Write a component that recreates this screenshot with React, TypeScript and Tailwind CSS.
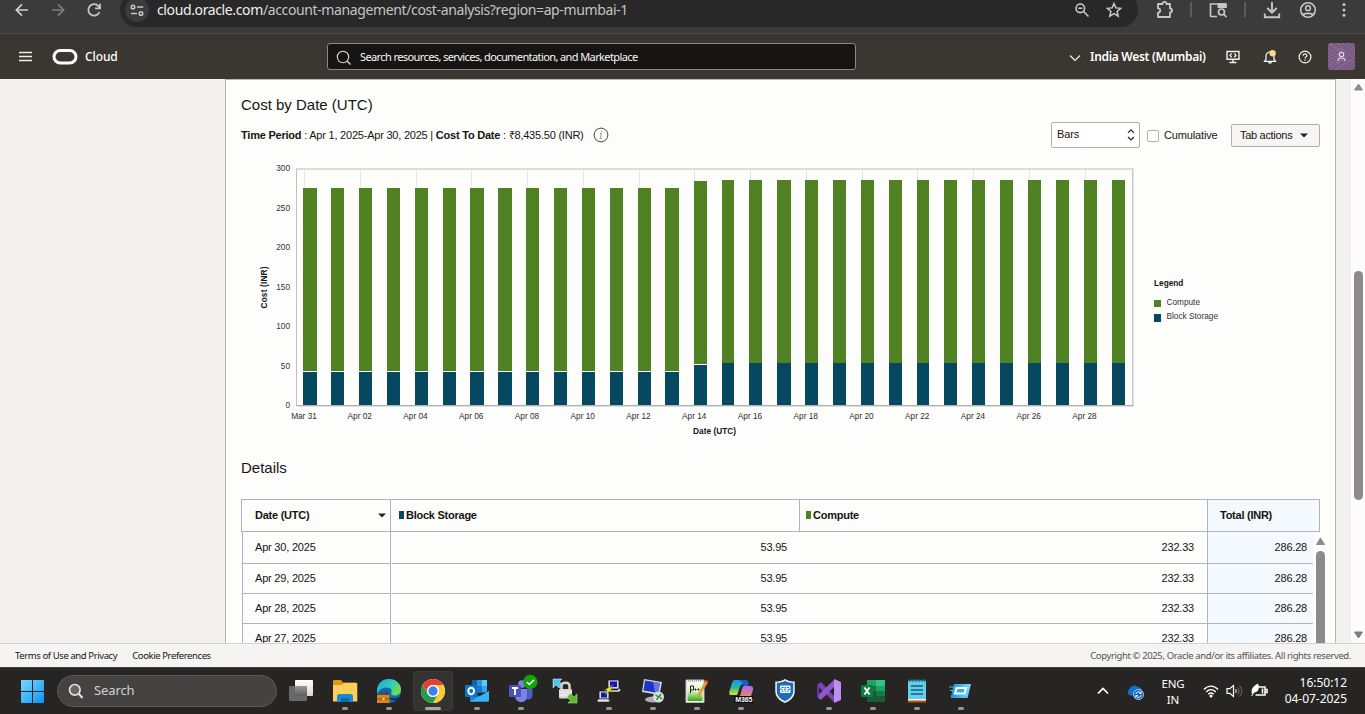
import React from "react";

type IconProps = { children: React.ReactNode; className?: string; size?: number; box?: number };

function Svg({ children, className = "", size = 24, box = 24 }: IconProps) {
  return (
    <svg width={size} height={size} viewBox={`0 0 ${box} ${box}`} fill="none" className={`shrink-0 ${className}`}>
      {children}
    </svg>
  );
}

function BrowserBar() {
  return (
    <div className="flex h-[34px] items-start border-b border-[#4a4a4a] bg-[#3b3b3b] text-[#c7c7c7]">
      <Svg className="ml-[10px] -mt-[2px] text-[#d0d0d0]">
        <path d="M18 12H6.5M12 6.3 6.3 12l5.7 5.7" stroke="currentColor" strokeWidth="1.7" />
      </Svg>
      <Svg className="ml-[12px] -mt-[2px] text-[#7d7d7d]">
        <path d="M6 12h11.5M12 6.3l5.700 5.700-5.700 5.700" stroke="currentColor" strokeWidth="1.7" />
      </Svg>
      <Svg className="ml-[12px] -mt-[2px]">
        <path d="M17.4 14a5.7 5.7 0 1 1-.9-5.7l1 1.2M18 5.7v4.6h-4.8" stroke="currentColor" strokeWidth="1.8" />
      </Svg>
      <div className="-mt-[7px] ml-[14px] flex h-[34px] w-[1018px] items-center rounded-full bg-[#282828]">
        <div className="-mt-[1px] ml-[5px] flex size-[24px] items-center justify-center rounded-full bg-[#3b3b3b]">
          <Svg size={16} box={16} className="mt-[2px]">
            <circle cx="4" cy="4" r="1.8" stroke="currentColor" strokeWidth="1.5" />
            <circle cx="12" cy="10.5" r="1.8" stroke="currentColor" strokeWidth="1.5" />
            <path d="M8 4h6.3M2 10.5h6" stroke="currentColor" strokeWidth="1.6" />
          </Svg>
        </div>
        <span className="ml-[8px] whitespace-nowrap font-['Noto_Sans',sans-serif] text-[14px] leading-[20px] tracking-[-0.375px] text-[#c4c4c4]">
          <span className="text-[#f0f0f0]">cloud.oracle.com</span>/account-management/cost-analysis?region=ap-mumbai-1
        </span>
        <Svg size={16} box={16} className="ml-auto mr-[16px]">
          <circle cx="6.3" cy="6.3" r="4.3" stroke="currentColor" strokeWidth="1.6" />
          <path d="M4.2 6.3h4.2M9.5 9.5l5 5" stroke="currentColor" strokeWidth="1.6" />
        </Svg>
        <Svg size={16} box={16} className="mr-[16px]">
          <path d="M8 1.5l1.900 4.400 4.800.4-3.600 3.100 1.100 4.700L8 11.600l-4.200 2.500 1.100-4.700L1.300 6.300l4.800-.4z" stroke="currentColor" strokeWidth="1.500" />
        </Svg>
      </div>
      <Svg size={20} box={20} className="ml-[17px]">
        <path d="M3 4h4.500V3.800a2 2 0 0 1 4 0V4H15v4.500a2 2 0 0 1 0 4V17H3v-4.300a2.200 2.200 0 0 0 0-4.400z" stroke="currentColor" strokeWidth="1.800" strokeLinejoin="round" />
      </Svg>
      <div className="ml-[15px] mt-[2px] h-[15px] w-[2px] bg-[#5c5c5c]" />
      <Svg size={20} box={20} className="ml-[17px]">
        <path d="M8 16.500H2.500a1 1 0 0 1-1-1V4h15v3" stroke="currentColor" strokeWidth="1.700" />
        <path d="M8.500 3.200H17a.8.8 0 0 1 .8.8v4H8.500z" fill="currentColor" />
        <circle cx="12.500" cy="12" r="3" stroke="currentColor" strokeWidth="1.700" />
        <path d="M14.500 14l3 3.300" stroke="currentColor" strokeWidth="1.700" />
      </Svg>
      <div className="ml-[15px] mt-[2px] h-[15px] w-[2px] bg-[#5c5c5c]" />
      <Svg size={20} box={20} className="ml-[16px]">
        <path d="M10 2v10.500M5.300 8 10 12.700 14.700 8M2.800 13.500v3.800h14.400v-3.800" stroke="currentColor" strokeWidth="1.900" />
      </Svg>
      <Svg size={20} box={20} className="ml-[16px]">
        <circle cx="10" cy="10" r="7.300" stroke="currentColor" strokeWidth="1.600" />
        <circle cx="10" cy="8.200" r="2.400" stroke="currentColor" strokeWidth="1.500" />
        <path d="M4.800 15c1.500-2.200 8.900-2.200 10.400 0" stroke="currentColor" strokeWidth="1.600" />
      </Svg>
      <Svg size={20} box={20} className="ml-[16px]">
        <g fill="currentColor"><circle cx="10" cy="4.600" r="1.500" /><circle cx="10" cy="10" r="1.500" /><circle cx="10" cy="15.300" r="1.500" /></g>
      </Svg>
    </div>
  );
}

function CloudHeader() {
  return (
    <header className="flex h-[45px] items-center bg-[#3a3631] font-['Noto_Sans',sans-serif] text-white">
      <Svg size={14} box={14} className="ml-[19px]">
        <path d="M0 2.500h13M0 6.500h13M0 10.500h13" stroke="#eee" strokeWidth="1.400" />
      </Svg>
      <svg width="26" height="18" viewBox="0 0 26 18" fill="none" className="ml-[19px]">
        <rect x="2" y="2.500" width="22" height="12.500" rx="6.250" stroke="#fff" strokeWidth="3" />
      </svg>
      <span className="ml-[7px] w-[34px] text-[12px] font-medium tracking-[-0.1px]">Cloud</span>
      <div className="ml-[208px] flex h-[27px] w-[529px] items-center rounded-[3px] border border-[#8b8985] bg-[#161513]">
        <Svg size={16} box={16} className="ml-[8px] mt-[2px]">
          <circle cx="7" cy="7" r="5.700" stroke="#ddd" strokeWidth="1.100" />
          <path d="M11 11l3.500 3.500" stroke="#ddd" strokeWidth="1.200" />
        </Svg>
        <span className="ml-[8px] mt-[1px] whitespace-nowrap text-[11px] tracking-[-0.6px] text-[#f6f6f4]">
          Search resources, services, documentation, and Marketplace
        </span>
      </div>
      <div className="ml-auto flex items-center">
        <Svg size={12} box={12} className="mr-[9px] mt-[2px]">
          <path d="M1 3.500l5 5 5-5" stroke="#eee" strokeWidth="1.200" />
        </Svg>
        <span className="w-[136px] whitespace-nowrap text-[12px] font-semibold tracking-[-0.3px]">India West (Mumbai)</span>
        <Svg size={14} box={14} className="mt-[1px]">
          <path d="M1 1.500h12v7.800H1zM7 9.300V12M3.500 12.500h7" stroke="#f0efed" strokeWidth="1.400" />
          <path d="M5.700 3.500 4 5.400l1.700 1.900M8.300 3.500 10 5.400 8.300 7.300" stroke="#f0efed" strokeWidth="1.300" />
        </Svg>
        <Svg size={16} box={16} className="ml-[22px]">
          <path d="M2.500 12.300h11l-1.500-2V7a4 4 0 0 0-8 0v3.300zM6.500 12.800c.3 1.700 2.700 1.700 3 0" stroke="#fff" strokeWidth="1.200" />
          <circle cx="10.600" cy="4.200" r="3.200" fill="#f5d88c" />
        </Svg>
        <Svg size={14} box={14} className="ml-[20px] mt-[1px]">
          <circle cx="7" cy="7" r="5.900" stroke="#f4f4f4" strokeWidth="1.200" />
          <path d="M5.200 5.700c0-2.500 3.800-2.300 3.700-.1C8.800 7 7 6.800 7 8.500M7 9.500v1.200" stroke="#f4f4f4" strokeWidth="1.200" />
        </Svg>
        <svg width="27" height="27" viewBox="0 0 27 27" fill="none" className="ml-[16px] mr-[10px] rounded-[3px]">
          <rect width="27" height="27" fill="#84658f" />
          <path d="M0 3l10 7M0 7l9 6M0 11l9 6M0 15l8 5M0 19l8 5M0 23l6 4M5 0l7 5M11 0l16 11M16 0l11 7M21 0l6 4M15 5l12 9M17 11l10 7M10 27l17-10M15 27l12-7M20 27l7-4M6 25l17-11" stroke="#6c4f79" strokeWidth="1" />
          <circle cx="13.500" cy="11.500" r="2.200" stroke="#e7dfe9" strokeWidth="1.100" />
          <path d="M10 18c0-4 7-4 7 0" stroke="#e7dfe9" strokeWidth="1.100" />
        </svg>
      </div>
    </header>
  );
}

const BAR_LEFT = [303, 331, 359, 387, 415, 443, 470, 498, 526, 554, 582, 610, 638, 665, 694, 722, 749, 777, 805, 833, 861, 889, 917, 944, 972, 1000, 1028, 1056, 1084, 1112];
const X_LABELS = ["Mar 31", "Apr 02", "Apr 04", "Apr 06", "Apr 08", "Apr 10", "Apr 12", "Apr 14", "Apr 16", "Apr 18", "Apr 20", "Apr 22", "Apr 24", "Apr 26", "Apr 28"];

function CostChart() {
  return (
    <svg width="1094" height="290" viewBox="241 155 1094 290" className="block shrink-0 font-['Liberation_Sans',sans-serif] text-[8.25px]">
      <g shapeRendering="crispEdges">
        {X_LABELS.map((l, i) => (
          <rect key={l} x={Math.round(304 + i * 55.75)} y="170" width="1" height="235" fill="#e6e6e6" />
        ))}
        <rect x="296" y="168" width="838" height="2" fill="#dcdcdb" />
        <rect x="1132" y="169" width="1" height="237" fill="#c9c9c9" />
        <rect x="1133" y="168" width="1" height="239" fill="#e2e2e2" />
        <rect x="296" y="169" width="1" height="237" fill="#c0c0c0" />
        {BAR_LEFT.map((x, i) => {
          const w = [0, 6, 7, 13, 17].includes(i) ? 14 : i === 15 || i === 22 ? 12 : 13;
          const top = i < 14 ? 188 : i === 14 ? 181 : 180;
          const blue = i < 14 ? 372 : i === 14 ? 365 : 363;
          return (
            <g key={x}>
              <rect x={x} y={top} width={w} height={405 - top} fill="#508223" />
              {i < 15 && <rect x={x} y={blue - 1} width={w} height="1" fill="#fff" />}
              <rect x={x} y={blue} width={w} height={405 - blue} fill="#05485f" />
            </g>
          );
        })}
        <rect x="296" y="405" width="837" height="1" fill="#b2b2b2" />
        <rect x="297" y="406" width="836" height="1" fill="#dedede" />
      </g>
      {[0, 50, 100, 150, 200, 250, 300].map((v) => (
        <text key={v} x="290" y={408 - v * 0.79} textAnchor="end" fill="#333">{v}</text>
      ))}
      {X_LABELS.map((l, i) => (
        <text key={l} x={304 + i * 55.75} y="419" textAnchor="middle" fill="#2c2c2c">{l}</text>
      ))}
      <text x="714.500" y="434" textAnchor="middle" textLength="43" fontWeight="bold" fill="#161513">Date (UTC)</text>
      <text transform="translate(267 287.500) rotate(-90)" textAnchor="middle" textLength="42" fontWeight="bold" fill="#161513">Cost (INR)</text>
      <text x="1154" y="286" fontWeight="bold" fill="#161513">Legend</text>
      <rect x="1154" y="300" width="7" height="7" fill="#508223" />
      <text x="1166.500" y="305" textLength="33.500" fill="#333">Compute</text>
      <rect x="1154" y="314" width="7" height="8" fill="#05485f" />
      <text x="1166.500" y="319" textLength="51.500" fill="#333">Block Storage</text>
    </svg>
  );
}

function Toolbar() {
  return (
    <div className="mt-[7px] flex h-[26px] w-[1079px] items-center text-[11px] tracking-[-0.15px]">
      <span className="whitespace-nowrap tracking-[-0.22px]">
        <b>Time Period</b> : Apr 1, 2025-Apr 30, 2025 | <b>Cost To Date</b> : ₹8,435.50 (INR)
      </span>
      <Svg size={16} box={16} className="ml-[9px]">
        <circle cx="8" cy="8" r="6.900" stroke="#444" strokeWidth="1" />
        <path d="M8.600 4v1.200M7 6.500h1.300L7.300 11.500h1.400" stroke="#8b8b8b" strokeWidth=".9" />
      </Svg>
      <div className="ml-auto flex h-[26px] w-[89px] items-center rounded-[2px] border border-[#b3aea8] bg-white pl-[5px] pr-[4px]">
        <span className="-mt-[2px]">Bars</span>
        <svg width="8" height="14" viewBox="0 0 8 14" fill="none" className="ml-auto">
          <path d="M1 4.800 4 1.800l3 3M1 9l3 3 3-3" stroke="#222" strokeWidth="1.200" />
        </svg>
      </div>
      <div className="ml-[7px] mt-[2px] size-[12px] rounded-[2px] border border-[#b5b0aa] bg-white" />
      <span className="ml-[5px] w-[67px] whitespace-nowrap">Cumulative</span>
      <div className="flex h-[23px] w-[89px] items-center rounded-[2px] border border-[#b3aea8] bg-[#f7f6f5] pl-[8px]">
        <span className="whitespace-nowrap tracking-[-0.3px]">Tab actions</span>
        <svg width="8" height="5" viewBox="0 0 8 5" className="ml-[8px] mt-[1px]"><path d="M0 .5h8L4 4.500z" fill="#222" /></svg>
      </div>
    </div>
  );
}

const ROWS = ["Apr 30, 2025", "Apr 29, 2025", "Apr 28, 2025", "Apr 27, 2025"];

function DetailsTable() {
  return (
    <div className="mt-[21px] w-[1079px] text-[11px] tracking-[-0.2px]">
      <div className="flex h-[33px] border border-[#b0b3bd] font-bold tracking-[-0.25px]">
        <div className="flex w-[149px] items-center border-r border-[#b0b3bd] pl-[13px] pr-[4px]">
          Date (UTC)
          <svg width="8" height="5" viewBox="0 0 8 5" className="ml-auto"><path d="M0 .5h8L4 4.500z" fill="#222" /></svg>
        </div>
        <div className="flex w-[409px] items-center border-r border-[#b0b3bd] pl-[8px]">
          <span className="-mt-[1px] mr-[2px] h-[8px] w-[5px] bg-[#05485f]" />Block Storage
        </div>
        <div className="flex w-[408px] items-center border-r border-[#b0b3bd] pl-[6px]">
          <span className="-mt-[1px] mr-[2px] h-[8px] w-[5px] bg-[#508223]" />Compute
        </div>
        <div className="flex flex-1 items-center bg-[#f4f9fd] pl-[12px]">Total (INR)</div>
      </div>
      <div className="flex">
        <div className="ml-[1px] w-[1071px] shrink-0">
          {ROWS.map((d, i) => (
            <div key={d} className={i === 0 ? "flex h-[32px]" : "flex h-[30px]"}>
              <div className="flex w-[149px] items-center border-x border-b border-[#b0b3bd] pl-[12px]">{d}</div>
              <div className="ml-[1px] flex w-[409px] items-center justify-end border-b border-[#b0b3bd] pr-[14px]">53.95</div>
              <div className="flex w-[406px] items-center justify-end border-b border-[#b0b3bd] pr-[13px]">232.33</div>
              <div className="flex w-[106px] items-center justify-end border-b border-l border-[#b0b3bd] bg-[#f4f9fd] pr-[6px]">286.28</div>
            </div>
          ))}
        </div>
        <div className="ml-[3px] flex w-[9px] shrink-0 flex-col items-center pt-[5px]">
          <svg width="9" height="8" viewBox="0 0 9 8"><path d="M4.500 1 8.500 7.500h-8z" fill="#8b8b8b" stroke="#8b8b8b" /></svg>
          <div className="mt-[6px] h-[120px] w-[9px] rounded-t-full bg-[#8b8b8b]" />
        </div>
      </div>
    </div>
  );
}

function Content() {
  return (
    <main className="flex h-[564px] overflow-hidden bg-[#f3f1f0]">
      <section className="ml-[225px] h-[720px] w-[1111px] border border-[#b9b4af] bg-[#fdfdfc] pl-[15px] font-['Liberation_Sans',Arial,sans-serif] text-[#161513]">
        <h1 className="mt-[15px] h-[20px] text-[15px] leading-[20px]">Cost by Date (UTC)</h1>
        <Toolbar />
        <div className="mt-[7px]"><CostChart /></div>
        <h2 className="mt-[13px] h-[20px] text-[15px] leading-[20px]">Details</h2>
        <DetailsTable />
      </section>
      <div className="ml-auto flex w-[14px] flex-col items-center bg-[#fcfcfc] pt-[4px]">
        <svg width="9" height="8" viewBox="0 0 9 8"><path d="M4.500 1 8.500 7h-8z" fill="#8b8b8b" stroke="#8b8b8b" /></svg>
        <div className="mt-[180px] h-[229px] w-[9px] rounded-full bg-[#8b8b8b]" />
        <svg width="9" height="8" viewBox="0 0 9 8" className="mt-[131px]"><path d="M4.500 7 .5 1h8z" fill="#7c7c7c" stroke="#7c7c7c" /></svg>
      </div>
    </main>
  );
}

const APPS: { name: string; run?: boolean; active?: boolean; art: React.ReactNode }[] = [
  {
    name: "Task view",
    art: (<><defs><linearGradient id="tv" x2="0" y2="1"><stop stopColor="#fff" /><stop offset="1" stopColor="#d5d5d5" /></linearGradient><linearGradient id="tg" x2="0" y2="1"><stop stopColor="#999" /><stop offset="1" stopColor="#5c5c5c" /></linearGradient></defs>
      <rect x="0" y="7" width="18" height="15" rx="1" fill="#686868" /><rect x="6" y="1" width="18" height="16" rx="1" fill="url(#tv)" /><path d="M6 7h12v10H6z" fill="url(#tg)" /></>),
  },
  {
    name: "Explorer", run: true,
    art: (<><path d="M0 2.500C0 1.500.7 1 1.500 1H8l2 2.500h13V9H0z" fill="#dc9a12" /><path d="M0 6h9l2-2h12.500c.5 0 .8.500.8 1v17.500H0z" fill="#fcd058" /><path d="M4 23v-5.500c0-1.500.8-2.500 2.300-2.500h11.400c1.500 0 2.300 1 2.300 2.500V23z" fill="#1b87d4" /><path d="M8 19h8v4H8z" fill="#1168ad" /></>),
  },
  {
    name: "Edge", run: true,
    art: (<><defs><linearGradient id="eg" x1="0" y1="0" x2="1" y2="0.500"><stop stopColor="#1fa4e8" /><stop offset=".6" stopColor="#35cbb6" /><stop offset="1" stopColor="#68e04d" /></linearGradient></defs>
      <circle cx="12" cy="12" r="12" fill="#1067b6" /><path d="M0 12C0 4.500 5.500 0 12 0c7 0 12 5 12 10.500 0 4-3 6-6.300 6-3 0-4.200-1.300-3.300-3 .8-2-.2-5-4-5C6 8.500 2 10 0 15z" fill="url(#eg)" /><path d="M11 11.500c-2 3 .5 8 6 8 2.500 0 4-.7 5.500-1.500l-1.500 3c-4 1-8 0-10-3s-2-5 0-6.500z" fill="#27282c" /><path d="M4 16v-2h5v2" stroke="#6c3a10" strokeWidth="1.500" /><path d="M0 16h12.500v8H0z" fill="#d8851c" /><path d="M0 20h12.500" stroke="#8a4a10" /><path d="M5.500 19h2v2h-2z" fill="#ffd86b" /></>),
  },
  {
    name: "Chrome", run: true, active: true,
    art: (<><circle cx="12" cy="12" r="12" fill="#fff" /><path d="M1.600 6A12 12 0 0 1 22.400 6H12a6 6 0 0 0-5.200 9z" fill="#e3402f" /><path d="M22.400 6A12 12 0 0 1 12 24l5.200-9A6 6 0 0 0 12 6z" fill="#fcc934" /><path d="M12 24A12 12 0 0 1 1.600 6l5.200 9a6 6 0 0 0 10.400 0z" fill="#269a4a" /><circle cx="12" cy="12" r="6" fill="#fff" /><circle cx="12" cy="12" r="4.700" fill="#3d7ff0" /></>),
  },
  {
    name: "Outlook", run: true,
    art: (<><path d="M7 1h15v13H7z" fill="#0f62ad" /><path d="M12 1h5v6h-5z" fill="#2c95df" /><path d="M17 1h5v6h-5z" fill="#50d1ff" /><path d="M12 7h5v6h-5z" fill="#137ad1" /><path d="M17 7h5v6h-5z" fill="#36a3ec" /><path d="M5 12l10 6 9-6v9.500c0 .800-.7 1.500-1.500 1.500H6.500C5.700 23 5 22.300 5 21.500z" fill="#1c84d4" /><path d="M5 22.500L24 12v10z" fill="#3eb2ee" /><rect x="0" y="6" width="12.500" height="12" rx="1" fill="#1173c7" /><ellipse cx="6.200" cy="12" rx="2.900" ry="3.300" stroke="#fff" strokeWidth="1.900" /></>),
  },
  {
    name: "Teams", run: true,
    art: (<><circle cx="13" cy="5" r="3.800" fill="#7b83eb" /><circle cx="20.500" cy="7" r="2.800" fill="#5059c9" /><path d="M16 10h7.500v6c0 5-5.500 5.500-7 3z" fill="#5059c9" /><path d="M6 10h12v7.500c0 7.500-11 7.500-12 0z" fill="#7b83eb" /><rect x="0" y="6" width="12" height="12" rx="1" fill="#4b53bc" /><path d="M3 9h6M6 9v7" stroke="#fff" strokeWidth="1.800" /><circle cx="21.300" cy="3" r="7.200" fill="#13a10e" /><path d="M17.800 3l2.500 2.500L25 .9" stroke="#fff" strokeWidth="1.500" /></>),
  },
  {
    name: "Secure transfer",
    art: (<><path d="M0 0h9L6.500 2.500l3 3-3.500 3.500-3-3L0 9z" fill="#55c3ea" stroke="#d5f4ff" strokeWidth=".5" /><path d="M8.500 11V7c0-4.500 8-4.500 8 0v4" stroke="#d6d6d6" strokeWidth="2.500" /><rect x="6" y="10" width="13" height="9.500" rx="1" fill="#dadada" /><path d="M6.500 13h12M6.500 16h12" stroke="#f4f4f4" /><path d="M24 24h-9l2.500-2.500-3.500-3.500 3.500-3.500 3.500 3.500L24 15z" fill="#58bd2c" stroke="#b5ed83" strokeWidth=".5" /></>),
  },
  {
    name: "Terminal", run: true,
    art: (<><path d="M11 1h11v9H11zM2 12h10v8H2z" fill="#d8d8d8" stroke="#111" strokeWidth=".7" /><path d="M13 2.500h7V8h-7zM4 13.500h6v5H4z" fill="#1012c8" /><path d="M10 11h11l1-2 2 2-2 2H10zM0 23l1-3h10l2 1-1 2z" fill="#e7e7e7" stroke="#222" strokeWidth=".6" /><path d="M17 5l-4 4h3l-8 7 2-5-3 .5z" fill="#f4e61c" stroke="#5c5500" strokeWidth=".4" /></>),
  },
  {
    name: "Remote desktop", run: true,
    art: (<><ellipse cx="12" cy="20.500" rx="8" ry="3" fill="#aeb2b8" /><path d="M3 0l18 3-2.500 13L1 13z" fill="#d2d6dd" /><path d="M4 1.500l15 2.500-2 10L2.500 11.500z" fill="#1a36c8" /><path d="M12 2.800l7 1.200-2 10-3-.6z" fill="#6479e2" /><circle cx="17.500" cy="18" r="5.500" fill="#dedede" /><path d="M14.500 16l3 2-2 3M20 15l-2 2.500 3 2.500" stroke="#2a9037" strokeWidth="1.400" /></>),
  },
  {
    name: "Text editor", run: true,
    art: (<><defs><linearGradient id="te" x2="0" y2="1"><stop stopColor="#f8f8f4" /><stop offset=".45" stopColor="#d9f3c0" /><stop offset="1" stopColor="#35a818" /></linearGradient></defs><path d="M1 1h18v22.500H1z" fill="#f8f8f4" stroke="#bbb" /><path d="M2.500 4h15v18h-15z" fill="url(#te)" /><path d="M3 2h14" stroke="#777" strokeDasharray="1 1" /><path d="M5.500 14V7h3v4h-3M10.500 9.500v2M9.500 10.500h2M13.500 9.500v2M12.500 10.500h2" stroke="#222" /><path d="M20 2l-7.500 14-.2 3 2.200-2L23 3.500z" fill="#e89c24" /><path d="M20 1l3 2" stroke="#c33" strokeWidth="1.800" /></>),
  },
  {
    name: "Copilot", run: true,
    art: (<><defs><linearGradient id="ca" x2="0" y2="1"><stop stopColor="#1792eb" /><stop offset=".5" stopColor="#27ba9a" /><stop offset="1" stopColor="#e8e02f" /></linearGradient><linearGradient id="cb" x2="0" y2="1"><stop stopColor="#a56bf2" /><stop offset="1" stopColor="#f08168" /></linearGradient></defs>
      <path d="M6 1h10c2 0 3 1.500 3.500 4h-5c-2 0-3 1-3.500 3L8 16H2c-2 0-2-2-1.500-4L3 4c.5-2 1.500-3 3-3z" fill="url(#ca)" /><path d="M9 1h6.500c2 0 3 1.500 3.500 4l.7 3H15c-1.500-3-1-6-6-7z" fill="#1959d2" /><path d="M15 7h6c3 0 3.500 2 3 4l-2 6H11l2-7c.5-2 1-3 2-3z" fill="url(#cb)" /><rect x="5.500" y="17" width="18.500" height="7" fill="#050505" /><text x="14.800" y="23" textAnchor="middle" textLength="17" fontSize="7" fontWeight="bold" fill="#fff">M365</text></>),
  },
  {
    name: "VPN shield",
    art: (<><path d="M12 0C9 2 6 2.500 2.300 2.500V12c0 6 4 9.500 9.700 12 5.700-2.500 9.700-6 9.700-12V2.500C18 2.500 15 2 12 0z" fill="#eef6fc" /><path d="M12 1.800c-2.500 1.500-5 2-8.200 2v8.200c0 5 3.500 8 8.200 10.200 4.700-2.200 8.200-5.200 8.200-10.200V3.800c-3.200 0-5.700-.5-8.200-2z" fill="#1c6cb8" /><rect x="7" y="6.500" width="10.500" height="7.500" rx="1" fill="#fff" /><path d="M8.500 8.500h2M11.500 8.500h1.500M14 8.500h2M8.500 12h2M11.500 12h1.500M14 12h2M7 10.200h2.500M15 10.200h2.500M11 10.200h2.500" stroke="#1c6cb8" strokeWidth="1" /></>),
  },
  {
    name: "Visual Studio", run: true,
    art: (<><path d="M1 5l3-2 14 15v6L1.500 8z" fill="#7644b4" /><path d="M1 19l3 2L18 7V0L1 16z" fill="#8d57cf" /><path d="M0 6l2-2v16l-2-2z" fill="#68369f" /><path d="M17 0l7 3v18l-7 3z" fill="#c18df2" /></>),
  },
  {
    name: "Excel", run: true,
    art: (<><path d="M6 1h18v22H6z" fill="#185c37" /><path d="M6 1h9v6H6z" fill="#21a366" /><path d="M15 1h9v6h-9z" fill="#33c481" /><path d="M6 7h9v5H6z" fill="#107c41" /><path d="M15 7h9v5h-9z" fill="#21a366" /><path d="M15 12h9v5h-9z" fill="#107c41" /><rect y="6" width="12" height="12" rx="1" fill="#107c41" /><path d="M3.500 8.500l5 7M8.500 8.500l-5 7" stroke="#fff" strokeWidth="1.900" /></>),
  },
  {
    name: "Notepad", run: true,
    art: (<><rect x="3" y="1.500" width="18" height="20" rx="1" fill="#62cfea" /><path d="M3 20h18v3.500H3z" fill="#b65b12" /><path d="M3 20h18v1.500H3z" fill="#f4f4f4" /><path d="M6 7h12M6 11h12M6 15h12" stroke="#12607c" strokeWidth="1.500" /><path d="M5 0v3M8 0v3M11 0v3M14 0v3M17 0v3M19.500 0v3" stroke="#16748f" strokeWidth="1.200" /></>),
  },
  {
    name: "Run", run: true,
    art: (<><defs><linearGradient id="rn" x2="1"><stop stopColor="#1593d7" /><stop offset="1" stopColor="#7bdcff" /></linearGradient></defs><path d="M5 5h17l-3.500 14H1.500z" fill="url(#rn)" /><path d="M7.500 9h9.500l-1.500 5.500H6z" stroke="#fff" strokeWidth="2" fill="#38ade4" /><path d="M0 8h5M1 11.500h3" stroke="#48bdf0" strokeWidth="1.200" /></>),
  },
];

function Taskbar() {
  return (
    <div className="flex h-[47px] items-center border-t border-[#414141] bg-[#272523] font-['Noto_Sans',sans-serif] text-white">
      <svg width="23" height="23" viewBox="0 0 23 23" className="ml-[21px] mt-[1px]">
        <defs><linearGradient id="wn" x2="1" y2="1"><stop stopColor="#77dcff" /><stop offset="1" stopColor="#0c94f7" /></linearGradient></defs>
        <path d="M1 0h10v11H0V1a1 1 0 0 1 1-1zM12 0h10a1 1 0 0 1 1 1v10H12zM0 12h11v11H1a1 1 0 0 1-1-1zM12 12h11v10a1 1 0 0 1-1 1H12z" fill="url(#wn)" />
      </svg>
      <div className="ml-[13px] flex h-[32px] w-[220px] items-center rounded-full border border-[#5a5a59] bg-[#444341]">
        <Svg size={16} box={16} className="ml-[10px]">
          <circle cx="6.800" cy="6.800" r="5.300" fill="#666" stroke="#e2e2e2" strokeWidth="1.700" />
          <path d="M10.500 10.500l4 4.500" stroke="#e2e2e2" strokeWidth="2" />
        </Svg>
        <span className="ml-[10px] text-[13px] tracking-[-0.1px] text-[#cfcfcf]">Search</span>
      </div>
      <div className="ml-[2px] flex">
        {APPS.map((a) => (
          <div key={a.name} className="flex w-[44px] justify-center">
            <div className={a.active ? "flex h-[40px] w-[40px] flex-col items-center rounded-[4px] border border-[#3d3c3b] bg-[#343331] pt-[7px]" : "flex h-[40px] w-[40px] flex-col items-center pt-[8px]"}>
              <Svg className="overflow-visible font-['Liberation_Sans',sans-serif]">{a.art}</Svg>
              {a.run && <div className={a.active ? "mt-[4px] h-[3px] w-[16px] rounded-full bg-[#a9a6a4]" : "mt-[4px] h-[3px] w-[6px] rounded-full bg-[#979593]"} />}
            </div>
          </div>
        ))}
      </div>
      <div className="ml-auto mr-[18px] flex items-center">
        <Svg size={12} box={12}><path d="M1 8.500l5-5 5 5" stroke="#fff" strokeWidth="1.700" /></Svg>
        <Svg size={17} box={17} className="ml-[18px] mt-[2px]">
          <path d="M3.500 11.500A3.500 3.500 0 0 1 2.500 5 5 5 0 0 1 11 3.200c3 0 4 2 4.200 4v4.300z" fill="#0f73cf" />
          <circle cx="11.500" cy="10.500" r="5" fill="#0a64b8" stroke="#d8eafa" strokeWidth=".8" />
          <path d="M8.800 10a2.800 2.800 0 0 1 5-1M14.200 7.500V9.500h-2M14.200 11.200a2.800 2.800 0 0 1-5 1M8.800 13.500v-2h2" stroke="#fff" />
        </Svg>
        <div className="ml-[13px] mt-[1px] w-[32px] text-center text-[11.500px] leading-[16px] tracking-[-0.1px]">ENG<br />IN</div>
        <svg width="16" height="13" viewBox="0 0 16 13" fill="none" className="ml-[14px]">
          <path d="M1 4.500c4-4.500 10-4.500 14 0M3.200 7c3-3 6.600-3 9.600 0M5.300 9.200c1.700-1.600 3.700-1.600 5.400 0" stroke="#fff" strokeWidth="1.400" /><circle cx="8" cy="11" r="1.500" fill="#fff" />
        </svg>
        <svg width="17" height="14" viewBox="0 0 17 14" fill="none" className="ml-[7px]">
          <path d="M1 4.700h2.800L7.500 1.500v11L3.800 9.300H1z" stroke="#fff" strokeWidth="1.200" /><path d="M9.500 5c1 1.200 1 2.800 0 4" stroke="#fff" /><path d="M11.500 3.200c2 2.200 2 5.400 0 7.600M13.500 1.500c3 3.300 3 7.700 0 11" stroke="#716f6d" />
        </svg>
        <svg width="17" height="14" viewBox="0 0 17 14" fill="none" className="ml-[8px] -mt-[2px]">
          <path d="M6 4h8v8H4.500M14.500 6.500H16v3h-1.500M11.500 5.500v5" stroke="#fff" strokeWidth="1.500" /><path d="M1 11C-.5 5 3 3 7 .5 9 5 7.500 9.500 3 9.500" fill="#fff" /><path d="M.5 13 5 6" stroke="#fff" />
        </svg>
        <div className="ml-[15px] w-[64px] whitespace-nowrap text-right text-[12px] leading-[16px] tracking-[-0.03px]">16:50:12<br />04-07-2025</div>
      </div>
    </div>
  );
}

export default function App() {
  return (
    <div className="h-[714px] w-[1365px] overflow-hidden">
      <BrowserBar />
      <CloudHeader />
      <Content />
      <footer className="flex h-[24px] items-center border-t border-[#d4d2d0] bg-[#f5f4f2] pl-[15px] pr-[14px] pt-[1px] font-['Noto_Sans',sans-serif] text-[9.500px] tracking-[-0.4px] text-[#161513]">
        <span>Terms of Use and Privacy</span>
        <span className="ml-[15px]">Cookie Preferences</span>
        <span className="ml-auto tracking-[-0.38px] text-[#55524f]">Copyright © 2025, Oracle and/or its affiliates. All rights reserved.</span>
      </footer>
      <Taskbar />
    </div>
  );
}
